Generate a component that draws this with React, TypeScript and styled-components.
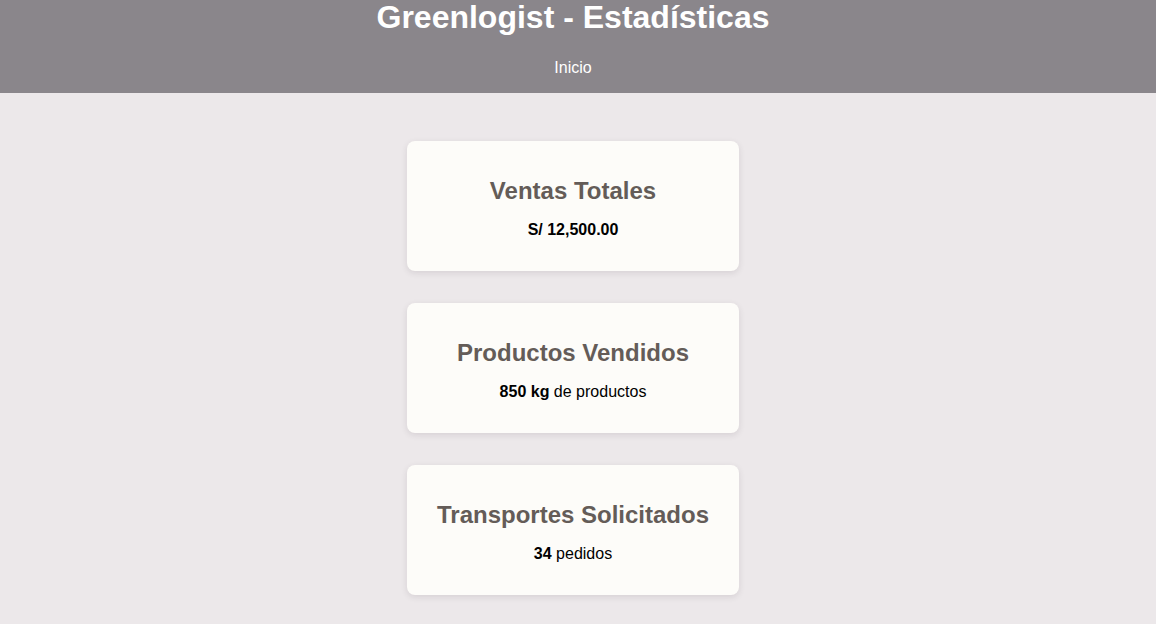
import React from "react";
import styled, { createGlobalStyle } from "styled-components";

const Global = createGlobalStyle`
  html, body {
    margin: 0;
    padding: 0;
    background: #ece8ea;
    font-family: "Liberation Sans", Arial, sans-serif;
  }
`;

const Header = styled.header`
  background: #8a868b;
  color: #ffffff;
  text-align: center;
  padding: 0 10px 16px 0;
`;

const Title = styled.h1`
  margin: 0;
  font-size: 32px;
  line-height: 34px;
  font-weight: 700;
`;

const Nav = styled.nav`
  margin-top: 24.6px;
  font-size: 16px;
  line-height: 18.4px;
`;

const NavLink = styled.a`
  color: #ffffff;
  text-decoration: none;
`;

const Main = styled.main`
  display: flex;
  flex-direction: column;
  align-items: center;
  gap: 32.5px;
  padding: 48px 10px 32px 0;
`;

const Card = styled.section`
  box-sizing: border-box;
  width: 332px;
  height: 129.5px;
  padding: 20px;
  background: #fdfcf9;
  border-radius: 8px;
  box-shadow: 0 2px 6px rgba(60, 40, 60, 0.12);
  text-align: center;
`;

const CardTitle = styled.h2`
  margin: 16px 0 0;
  font-size: 24px;
  line-height: 27.6px;
  font-weight: 700;
  color: #645c58;
`;

const CardValue = styled.p`
  margin: 16px 0 0;
  font-size: 16px;
  line-height: 18.4px;
  color: #000000;
`;

const stats = [
  { title: "Ventas Totales", strong: "S/ 12,500.00", rest: "" },
  { title: "Productos Vendidos", strong: "850 kg", rest: " de productos" },
  { title: "Transportes Solicitados", strong: "34", rest: " pedidos" },
];

export default function App() {
  return (
    <>
      <Global />
      <Header>
        <Title>Greenlogist - Estadísticas</Title>
        <Nav>
          <NavLink href="#">Inicio</NavLink>
        </Nav>
      </Header>
      <Main>
        {stats.map((s) => (
          <Card key={s.title}>
            <CardTitle>{s.title}</CardTitle>
            <CardValue>
              <strong>{s.strong}</strong>
              {s.rest}
            </CardValue>
          </Card>
        ))}
      </Main>
    </>
  );
}
